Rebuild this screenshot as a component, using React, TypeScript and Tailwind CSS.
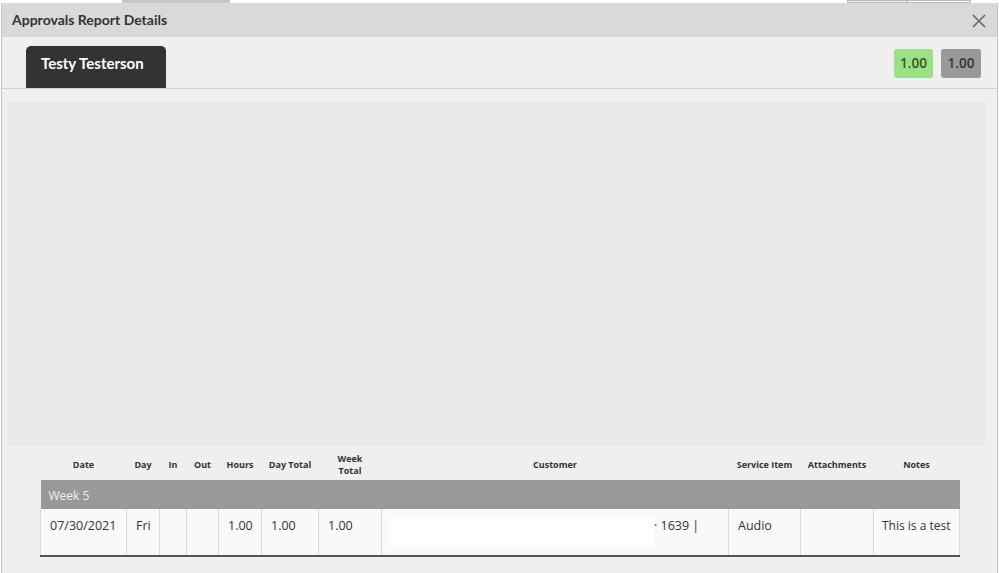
import React from "react";

const cols = [86, 33, 27, 32, 43, 57, 63, 347, 72, 73, 86];
const headers = ["Date", "Day", "In", "Out", "Hours", "Day Total", "Week Total", "Customer", "Service Item", "Attachments", "Notes"];

export default function App() {
  return (
    <div className="relative w-[999px] h-[573px] bg-white overflow-hidden" style={{ fontFamily: '"Open Sans", "DejaVu Sans", sans-serif' }}>
      {/* page behind */}
      <div className="flex h-[3px]">
        <div className="ml-[122px] w-[108px] bg-[#c8c8c8]" />
        <div className="ml-auto mr-[28px] flex">
          <div className="w-[60px] bg-[#e6f3df] border border-[#bbb]" />
          <div className="w-[64px] bg-white border border-[#bbb]" />
        </div>
      </div>
      {/* modal */}
      <div className="absolute top-[3px] left-[1px] right-[1px] bottom-0 flex flex-col border-x border-[#c4c4c4] bg-[#efefef]">
        <div className="h-[34px] shrink-0 bg-[#d9d9d9] flex items-center justify-between pl-[10px] pr-[11px]">
          <span className="text-[14px] font-bold text-[#333] -mt-[1px]" style={{ fontFamily: 'Lato, "Open Sans", sans-serif' }}>Approvals Report Details</span>
          <svg width="14" height="14" viewBox="0 0 14 14" className="mt-[1px]">
            <path d="M1 1 L13 13 M13 1 L1 13" stroke="#666" strokeWidth="1.6" />
          </svg>
        </div>
        <div className="h-[52px] shrink-0 flex items-end justify-between border-b border-[#d2d2d2] pl-[24px] pr-[16px]">
          <div className="h-[42px] w-[140px] bg-[#333] rounded-t-[5px] pl-[15px] pt-[6px] text-[15px] font-bold text-white" style={{ fontFamily: 'Lato, "Open Sans", sans-serif' }}>Testy Testerson</div>
          <div className="flex gap-[8px] self-start mt-[12px]">
            <div className="w-[39px] h-[29px] rounded-[3px] bg-[#9ddf85] flex items-center justify-center text-[13.5px] font-semibold text-[#2f5a24]">1.00</div>
            <div className="w-[40px] h-[29px] rounded-[3px] bg-[#999] flex items-center justify-center text-[13.5px] font-semibold text-[#333]">1.00</div>
          </div>
        </div>
        <div className="mt-[12px] ml-[6px] mr-[12px] h-[345px] bg-[#e9e9e9]" />
        <div className="ml-[38px] w-[919px] mt-[6px]">
          <table className="table-fixed w-[919px] border-collapse">
            <colgroup>
              {cols.map((w, i) => (
                <col key={i} style={{ width: w }} />
              ))}
            </colgroup>
            <thead>
              <tr className="h-[26px]">
                {headers.map((h, i) => (
                  <th key={i} className={`text-[9px] font-bold text-[#333] text-center leading-[12px] align-middle ${i === 6 ? "px-[14px]" : "px-0"}`}>{h}</th>
                ))}
              </tr>
            </thead>
            <tbody>
              <tr className="h-[2px]"><td colSpan={11} /></tr>
              <tr className="h-[29px] bg-[#999]">
                <td colSpan={11} className="pl-[8px] pt-[2px] text-[12px] text-[#f0f0f0] align-middle">Week 5</td>
              </tr>
              <tr className="h-[47px] bg-[#f9f9f9] border-b-2 border-[#555] text-[12.5px] text-[#333] align-top">
                <td className="pl-[9px] pt-[8px] border-l border-[#d6d6d6]">07/30/2021</td>
                <td className="pl-[9px] pt-[8px] border-l border-[#d6d6d6]">Fri</td>
                <td className="border-l border-[#d6d6d6]" />
                <td className="border-l border-[#d6d6d6]" />
                <td className="pl-[9px] pt-[8px] border-l border-[#d6d6d6]">1.00</td>
                <td className="pl-[9px] pt-[8px] border-l border-[#d6d6d6]">1.00</td>
                <td className="pl-[9px] pt-[8px] border-l border-[#d6d6d6]">1.00</td>
                <td className="pl-[8px] pt-[8px] border-l border-[#d6d6d6]">
                  <div className="flex items-start">
                    <div className="w-[264px] h-[30px] bg-white" />
                    <span className="text-[#333]">· 1639 |</span>
                  </div>
                </td>
                <td className="pl-[9px] pt-[8px] border-l border-[#d6d6d6]">Audio</td>
                <td className="border-l border-[#d6d6d6]" />
                <td className="pl-[8px] pt-[8px] text-[12px] border-x border-[#d6d6d6]">This is a test</td>
              </tr>
            </tbody>
          </table>
        </div>
      </div>
    </div>
  );
}
